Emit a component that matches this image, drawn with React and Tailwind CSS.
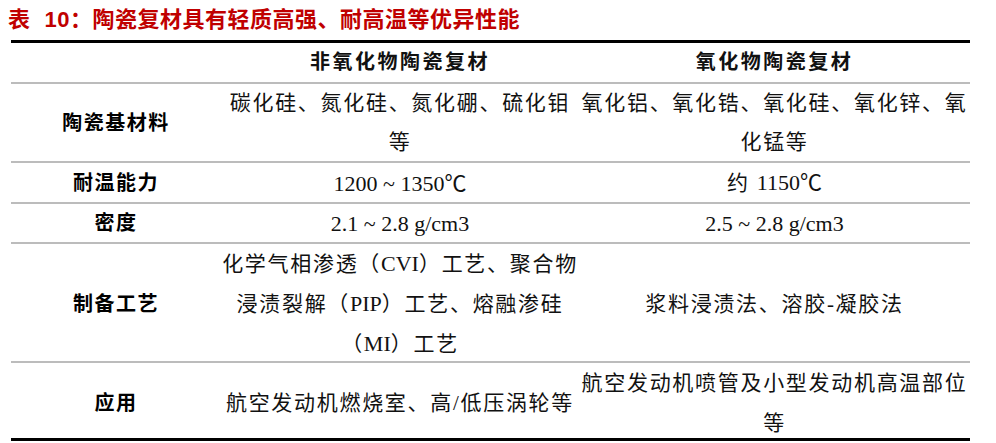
import React from "react";

const serif = { fontFamily: '"Liberation Serif", "Noto Sans CJK SC", serif' };

function L({ children }) {
  return <span className="tracking-normal text-[22px]">{children}</span>;
}

function Row({ h, label, c2, c3, border = true }) {
  return (
    <div
      className={`grid grid-cols-[210px_358px_391px] ${border ? "border-t-2 border-[#bcbcbc]" : ""}`}
      style={{ height: h }}
    >
      <div className="flex items-center justify-center font-bold tracking-[1.5px] text-[20px] text-black">
        {label}
      </div>
      <div className="flex items-center justify-center text-center whitespace-nowrap">{c2}</div>
      <div className="flex items-center justify-center text-center whitespace-nowrap">{c3}</div>
    </div>
  );
}

export default function App() {
  return (
    <div className="w-[996px] h-[443px] bg-white overflow-hidden pt-[5px]">
      <div
        className="h-[30px] leading-[30px] pl-[8px] text-[22px] font-bold text-[#c00000] tracking-[0.5px] whitespace-nowrap"
        style={{ fontFamily: '"Liberation Sans", "Noto Sans CJK SC", sans-serif' }}
      >
        表<span className="ml-[14px]">10</span>：陶瓷复材具有轻质高强、耐高温等优异性能
      </div>
      <div
        className="ml-[11px] mt-[5px] w-[959px] border-t-[3px] border-b-[3px] border-black text-[21px] leading-[39px] tracking-[1.7px] text-[#111]"
        style={serif}
      >
        <Row
          h={39}
          border={false}
          label=""
          c2={<span className="font-bold text-[20px] tracking-[2.5px]">非氧化物陶瓷复材</span>}
          c3={<span className="font-bold text-[20px] tracking-[2.5px]">氧化物陶瓷复材</span>}
        />
        <Row
          h={79}
          label="陶瓷基材料"
          c2={
            <div>
              碳化硅、氮化硅、氮化硼、硫化钼
              <br />等
            </div>
          }
          c3={
            <div>
              氧化铝、氧化锆、氧化硅、氧化锌、氧
              <br />
              化锰等
            </div>
          }
        />
        <Row
          h={41}
          label="耐温能力"
          c2={<L>1200 ~ 1350℃</L>}
          c3={
            <span>
              约 <L>1150℃</L>
            </span>
          }
        />
        <Row h={40} label="密度" c2={<L>2.1 ~ 2.8 g/cm3</L>} c3={<L>2.5 ~ 2.8 g/cm3</L>} />
        <Row
          h={119}
          label="制备工艺"
          c2={
            <div>
              化学气相渗透（<L>CVI</L>）工艺、聚合物
              <br />
              浸渍裂解（<L>PIP</L>）工艺、熔融渗硅
              <br />（<L>MI</L>）工艺
            </div>
          }
          c3={<div>浆料浸渍法、溶胶-凝胶法</div>}
        />
        <Row
          h={77}
          label="应用"
          c2={<div>航空发动机燃烧室、高/低压涡轮等</div>}
          c3={
            <div className="leading-[40px]">
              航空发动机喷管及小型发动机高温部位
              <br />等
            </div>
          }
        />
      </div>
    </div>
  );
}
